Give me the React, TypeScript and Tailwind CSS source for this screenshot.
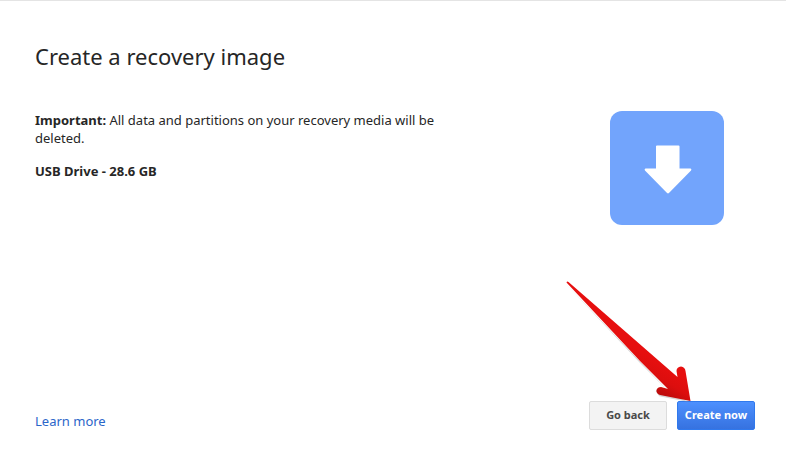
import React from "react";

const font = "font-['Noto_Sans',sans-serif]";

const RedArrow = () => (
  <svg
    className="absolute left-[560px] top-[275px] pointer-events-none"
    width="140"
    height="135"
    viewBox="560 275 140 135"
  >
    <defs>
      <linearGradient id="arrowFill" gradientUnits="userSpaceOnUse" x1="675" y1="370" x2="662" y2="392">
        <stop offset="0" stopColor="#e60f0f" />
        <stop offset="0.55" stopColor="#dc0e0e" />
        <stop offset="1" stopColor="#c00c0c" />
      </linearGradient>
    </defs>
    <path
      d="M566.5 281.5 L640 360 L668 388 L661 386 Q657.5 386 656.5 389 L660 394 L690.5 400 L672 392 Z"
      fill="#9a9a9a"
      opacity="0.4"
      transform="translate(-0.7 1.2)"
    />
    <path
      d="M566.5 281.5 Q567 280 568.5 281 L677.5 376 L676.5 370 Q676.5 366 681 365.5 Q685 366 685.5 370 L690.5 400 L660 394 Q656 392.5 656.5 389 Q657.5 386 661 386 L668 388 L640 360 Z"
      fill="url(#arrowFill)"
    />
  </svg>
);

const DownloadTile = () => (
  <div className="w-[114px] h-[114px] mt-[15px] pt-[4px] pl-[2px] rounded-[12px] bg-[#72a4fc] flex items-center justify-center">
    <svg width="48" height="50" viewBox="0 0 50 52">
      <path
        d="M12.5 1.5 Q12.5 0.5 13.5 0.5 L36 0.5 Q37 0.5 37 1.5 L37 24.5 L48.5 24.5 Q50 25 49 26.5 L26 50 Q25 51 24 50 L1 26.5 Q0 25 1.5 24.5 L12.5 24.5 Z"
        fill="#ffffff"
      />
    </svg>
  </div>
);

export default function App() {
  return (
    <div className={`${font} relative w-[786px] h-[457px] bg-white border-t border-[#e4e4e4] overflow-hidden flex flex-col pt-[40px] pb-[27px] pl-[35px] pr-[31px] text-[#262626]`}>
      <h1 className="text-[22px] leading-[30px] font-normal text-[#262626]">
        Create a recovery image
      </h1>
      <div className="flex justify-between mt-[25px] pr-[31px]">
        <div className="w-[420px] text-[13px] leading-[18px] pt-[15px]">
          <p>
            <b className="font-bold">Important:</b> All data and partitions on your recovery media will be deleted.
          </p>
          <p className="font-bold mt-[15px]">USB Drive - 28.6 GB</p>
        </div>
        <DownloadTile />
      </div>
      <div className="mt-auto flex items-end justify-between">
        <a className="text-[13px] leading-[18px] text-[#2b66c9]">Learn more</a>
        <div className="flex gap-[10px]">
          <button className="w-[78px] h-[29px] rounded-[2px] border border-[#dcdcdc] bg-[#f3f3f3] text-[11px] font-bold text-[#4a4a4a]">
            Go back
          </button>
          <button className="w-[78px] h-[29px] rounded-[2px] border border-[#3079ed] bg-gradient-to-b from-[#4d90fe] to-[#3672e0] text-[11px] font-bold text-white">
            Create now
          </button>
        </div>
      </div>
      <RedArrow />
    </div>
  );
}
